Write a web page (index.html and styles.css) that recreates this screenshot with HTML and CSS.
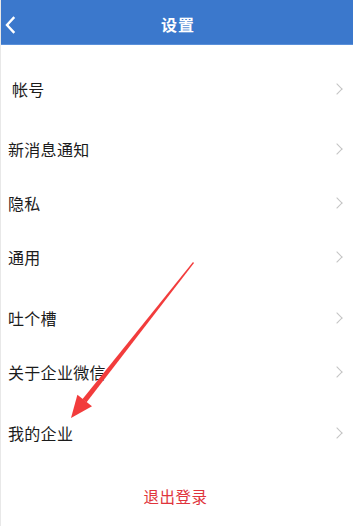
FILE: index.html
```html
<!DOCTYPE html>
<html lang="zh-CN">
<head>
<meta charset="utf-8">
<link rel="stylesheet" href="styles.css">
</head>
<body>
<div class="page">
  <header class="bar">
    <svg class="back" width="12" height="18" viewBox="0 0 12 18"><path d="M9.5 2 L3 9 L9.5 16" fill="none" stroke="#fff" stroke-width="2.4" stroke-linecap="square"/></svg>
    <div class="title">设置</div>
  </header>
  <main class="list">
    <section class="group">
      <div class="row"><span class="label indent">帐号</span><span class="chev"></span></div>
    </section>
    <section class="group">
      <div class="row"><span class="label">新消息通知</span><span class="chev"></span></div>
      <div class="row"><span class="label">隐私</span><span class="chev"></span></div>
      <div class="row"><span class="label">通用</span><span class="chev"></span></div>
    </section>
    <section class="group wide">
      <div class="row"><span class="label">吐个槽</span><span class="chev"></span></div>
      <div class="row"><span class="label">关于企业微信</span><span class="chev"></span></div>
    </section>
    <section class="group wide">
      <div class="row"><span class="label">我的企业</span><span class="chev"></span></div>
    </section>
    <section class="group wide">
      <div class="row logout">退出登录</div>
    </section>
  </main>
  <svg class="arrow" width="353" height="526" viewBox="0 0 353 526">
    <polygon points="192,262 193,263 85.6,402.2 81.4,399.2" fill="#f23c3c"/>
    <polygon points="70,418 76.4,394.8 91,406.2" fill="#f23c3c"/>
  </svg>
</div>
</body>
</html>
```
FILE: styles.css
```css
html, body {
  margin: 0;
  padding: 0;
  background: #fff;
}
.page {
  position: relative;
  width: 353px;
  height: 526px;
  overflow: hidden;
  font-family: "Noto Sans CJK SC", "Noto Sans", sans-serif;
  border-left: 1px solid #e8e8e8;
  box-sizing: border-box;
}
.bar {
  height: 45px;
  background: #3b78cc;
  border-bottom: 1px solid #5a90da;
  box-sizing: border-box;
  display: flex;
  align-items: center;
  justify-content: center;
  position: relative;
  padding-top: 4px;
}
.back {
  position: absolute;
  left: 3px;
  top: 16px;
}
.title {
  color: #fff;
  font-size: 16px;
  font-weight: 700;
  letter-spacing: 1px;
  margin-left: 2px;
}
.list {
  padding-top: 17px;
  display: flex;
  flex-direction: column;
  gap: 6px;
}
.group {
  display: flex;
  flex-direction: column;
}
.group.wide {
  margin-top: 1px;
}
.row {
  height: 54px;
  display: flex;
  align-items: center;
  justify-content: space-between;
  padding: 0 10px 0 7px;
}
.label {
  font-size: 16px;
  color: #1c1c1c;
  letter-spacing: 0.3px;
}
.indent {
  padding-left: 4px;
}
.chev {
  width: 7px;
  height: 7px;
  border-top: 1.2px solid #c4c4c4;
  border-right: 1.2px solid #c4c4c4;
  transform: rotate(45deg);
  margin-right: 2px;
}
.logout {
  justify-content: center;
  color: #e0343c;
  font-size: 15.5px;
  letter-spacing: 0.5px;
  padding-top: 2px;
}
.arrow {
  position: absolute;
  left: 0;
  top: 0;
  pointer-events: none;
}
```
